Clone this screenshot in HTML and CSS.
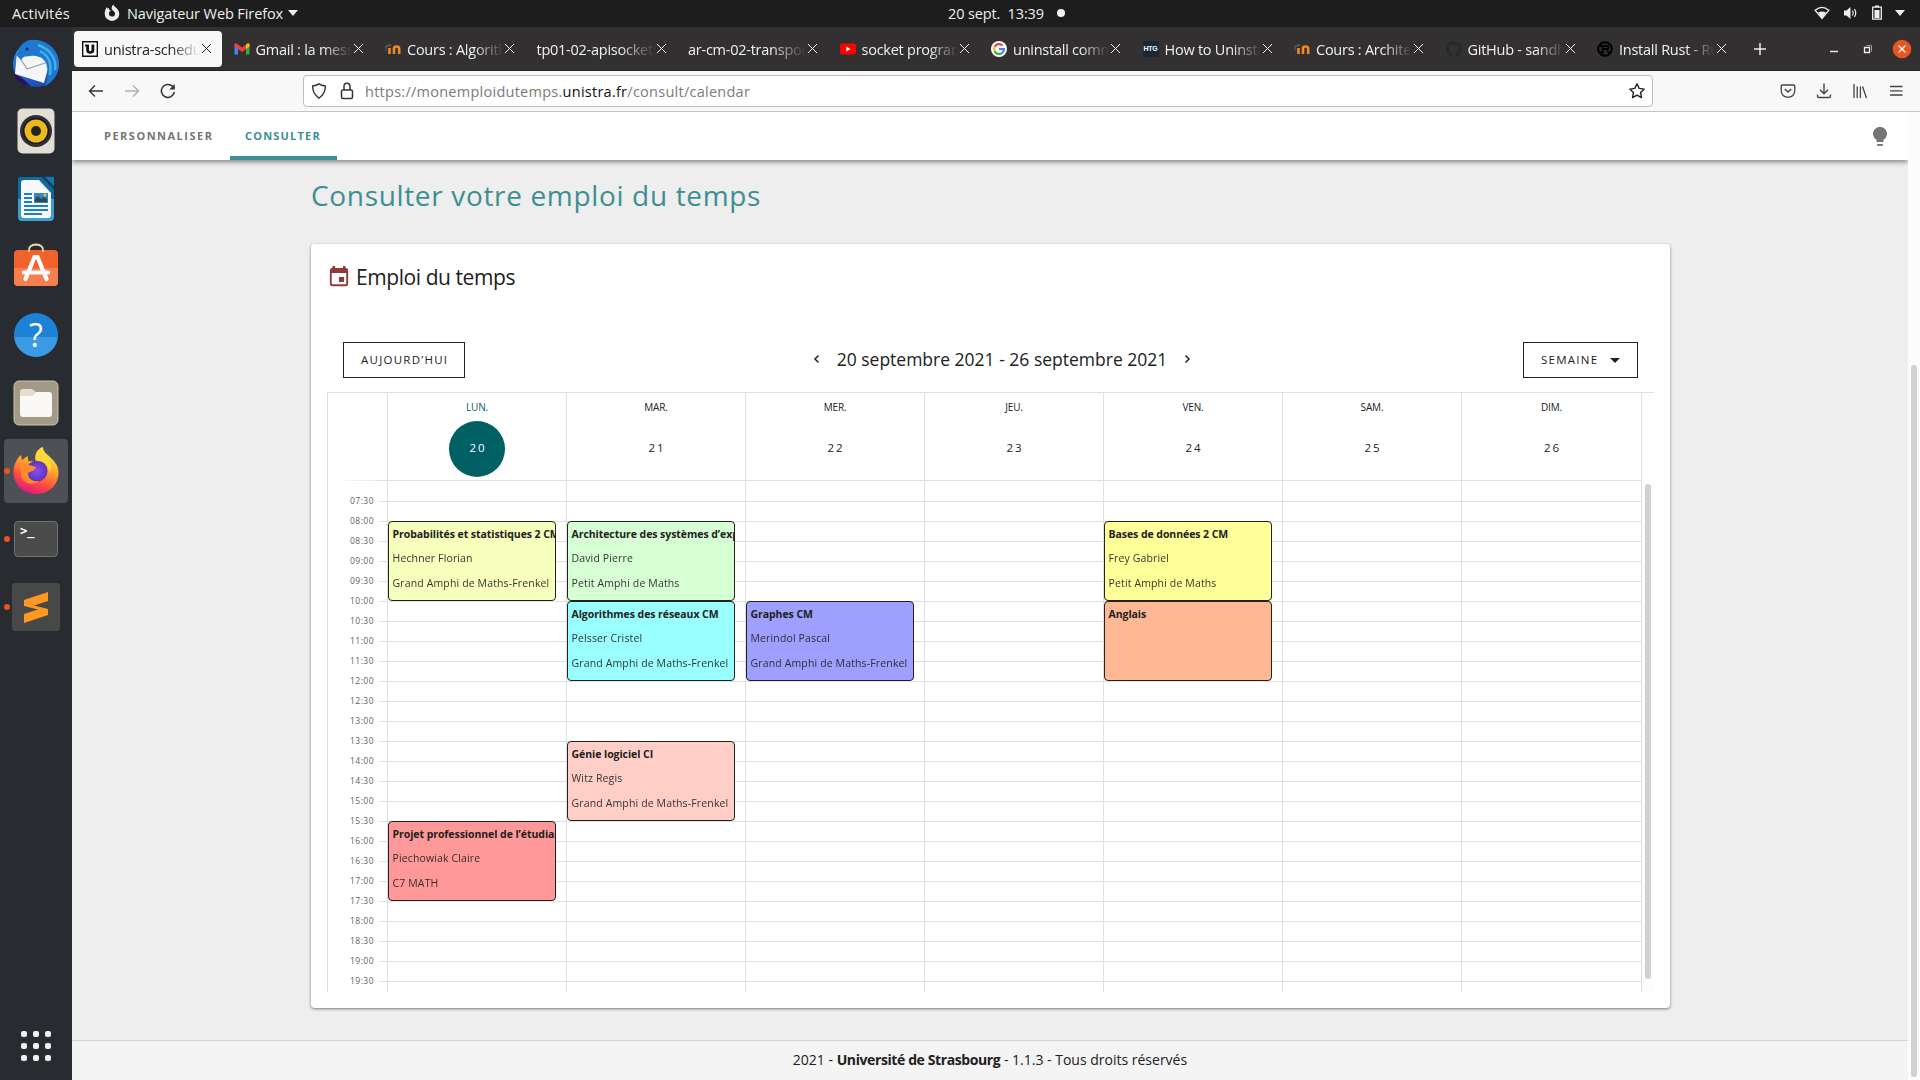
FILE: index.html
```html
<!DOCTYPE html>
<html lang="fr">
<head>
<meta charset="utf-8">
<title>Emploi du temps</title>
<link rel="stylesheet" href="styles.css">
</head>
<body>
<header class="topbar">
  <span class="t-act">Activités</span>
  <svg class="ff-sym" width="16" height="18" viewBox="0 0 16 18"><path d="M8 17A7.3 7.3 0 0 1 .7 9.700C.7 7 1.600 4.500 3 3l.5 1.800L5 4l.3 2 1.700.2C5.500 7 5 8 5 9.500a3 3 0 0 0 6 .2C11 8 10 7 8.500 6.200 7 5 7.500 2 9.500.5 9.800 3 15.300 4.500 15.300 9.700A7.300 7.300 0 0 1 8 17z" fill="#eee"/></svg>
  <span class="t-nav">Navigateur Web Firefox</span>
  <i class="caret"></i>
  <span class="t-date">20 sept.&nbsp; 13:39</span><i class="dot"></i>
  <div class="sys">
    <svg width="16" height="14" viewBox="0 0 16 14"><path d="M1.200 4.300Q8-1.600 14.800 4.300L8 12.500z" fill="none" stroke="#eee" stroke-width="1.300"/><path d="M4 6.500Q8 4.500 12 6.500L8 12.500z" fill="#eee"/></svg>
    <svg width="16" height="14" viewBox="0 0 16 14"><path d="M1 4.500h2.500L7.500 1v12L3.500 9.500H1z" fill="#eee"/><path d="M9.500 4.500q1.500 2.500 0 5M11.500 3q2.500 4 0 8" fill="none" stroke="#eee" stroke-width="1.200"/></svg>
    <svg width="12" height="16" viewBox="0 0 12 16"><path d="M1.700 2.200h8.600v12H1.700z" fill="none" stroke="#eee" stroke-width="1.300"/><path d="M3.500 5h5v8h-5zM4 .5h4v1.500H4z" fill="#eee"/></svg>
    <i class="caret"></i>
  </div>
</header>
<div class="desktop">
<nav class="dock">
  <div class="app"><svg width="52" height="52" viewBox="0 0 52 52"><defs><linearGradient id="tb" x2="1" y2="1"><stop stop-color="#1d8fe0"/><stop offset="1" stop-color="#2438a8"/></linearGradient></defs><circle cx="26" cy="27" r="23" fill="url(#tb)"/><path d="M4 36c0 6 8 12 17 13l-9-8z" fill="#2a0f62"/><path d="M7 14L31 20l8 8-5 18L5 37z" fill="#f5f6f8"/><path d="M7 16l10 16 21-7" fill="none" stroke="#9a9fa8" stroke-width="1.200"/><path d="M6 18C10 6 18 2 24 3c10-1 25 8 25 24 0 10-6 18-14 22 4-9 3-16 1-23-2-6-10-8-16-7-4 1-6-1-9 4z" fill="#1f78cf"/><path d="M28 8c12 4 19 14 17 25M30 14c8 4 12 12 10 24" stroke="#3fb0ea" stroke-width="2.500" fill="none"/><circle cx="17" cy="12" r="1.500" fill="#1a2c55"/></svg></div>
  <div class="app"><svg width="38" height="46" viewBox="0 0 38 46"><rect x=".5" y=".5" width="37" height="45" rx="5" fill="#e3ded3"/><circle cx="19" cy="23" r="16" fill="#2f2e38"/><circle cx="19" cy="23" r="13" fill="#17161d"/><circle cx="19" cy="23" r="11.500" fill="#ecb91d"/><circle cx="19" cy="23" r="5" fill="#222"/></svg></div>
  <div class="app"><svg width="38" height="46" viewBox="0 0 38 46"><rect x="1" y="1" width="36" height="44" rx="4" fill="#3f9fd0"/><path d="M1 23V5a4 4 0 0 1 4-4h32v22z" fill="#0d6ba3"/><path d="M4 7a3 3 0 0 1 3-3h15l12 13v22a3 3 0 0 1-3 3H7a3 3 0 0 1-3-3z" fill="#f6f8f9"/><path d="M24 0l13 14V0z" fill="#1b3b50"/><path d="M28 1h9v9z" fill="#1278af"/><path d="M7 18h8M7 22h8M7 26h8M7 30h24M7 34h24M7 38h18" stroke="#1e83bd" stroke-width="1.800"/><path d="M17 17h14v10H17z" fill="#2a8ac4"/><path d="M18 26v-3l3-3 3 3 3-2 3 2v3z" fill="#36474f"/><circle cx="28" cy="19" r="1.500" fill="#f4c430"/></svg></div>
  <div class="app soft"><svg width="46" height="44" viewBox="0 0 46 44"><rect x="1" y="7" width="44" height="36" rx="4" fill="#f1622c"/><path d="M1 25h44v14a4 4 0 0 1-4 4H5a4 4 0 0 1-4-4z" fill="#f4804f"/><path d="M16 9V7q0-5 7-5.500 7 .5 7 5.500v2" fill="none" stroke="#e9d9a6" stroke-width="1.800"/><path d="M12.500 36L21.500 14h3l9 22M11 29.500h24" fill="none" stroke="#fff" stroke-width="4.200" stroke-linecap="round"/></svg></div>
  <div class="app"><div class="help">?</div></div>
  <div class="app"><svg width="46" height="46" viewBox="0 0 46 46"><rect x="1" y="1" width="44" height="44" rx="5" fill="#a29a86" stroke="#c9c2af"/><path d="M7 12a3 3 0 0 1 3-3h9l4 3v8H7z" fill="#e4ded1"/><path d="M7 16h13l3-4h13a3 3 0 0 1 3 3v19a3 3 0 0 1-3 3H10a3 3 0 0 1-3-3z" fill="#faf9f7"/></svg></div>
  <div class="app"><i class="run"></i><div class="tile"><svg width="48" height="50" viewBox="0 0 48 50"><defs><linearGradient id="fx" x1=".7" y1="0" x2=".3" y2="1"><stop stop-color="#fff04a"/><stop offset=".4" stop-color="#ffa52a"/><stop offset=".7" stop-color="#ff4e3d"/><stop offset="1" stop-color="#e0128a"/></linearGradient><radialGradient id="fp"><stop stop-color="#8a4bf5"/><stop offset="1" stop-color="#5a36b8"/></radialGradient></defs><path d="M24 48C11 48 1.500 38.500 1.500 26c0-7 3-13 7.500-17l1 5 5.500-4 1 5.500c2-1 5-.5 7 0C22 9 25 3 31 1c0 5 4 7 8 11 4 4 7.500 8 7.500 14.500C46.500 39 37 48 24 48z" fill="url(#fx)"/><circle cx="25" cy="25" r="10.500" fill="url(#fp)"/><path d="M7 19c7-2 11 0 17 2-1 4-5 4-8 6 0 7 6 9 11 8-8 6-18 1-18-7 0-4 0-6-2-9z" fill="#ff8a2b"/><path d="M25 15c6 0 13 3 12 12 4-6 2-14-3-19-3-2-5-4-4-7-5 3-8 9-5 14z" fill="#ffd83c"/></svg></div></div>
  <div class="app"><i class="run"></i><div class="term"><span>&gt;_</span></div></div>
  <div class="app"><i class="run"></i><div class="subl"><svg width="26" height="32" viewBox="0 0 26 32"><path d="M1 9L25 1v9l-14 4.500L25 18v6L1 32v-9l14-4.500L1 15z" fill="#ff9820"/></svg></div></div>
  <div class="grid9"><i></i><i></i><i></i><i></i><i></i><i></i><i></i><i></i><i></i></div>
</nav>
<main class="browser">
  <div class="tabs">
    <div class="tab on"><svg class="fav" viewBox="0 0 16 16"><path d="M.7.700h14.600v14.600H.7z" fill="#fff" stroke="#111" stroke-width="1.400"/><path d="M3 3.500h4V9q0 1.300 1.200 1.300T9.500 9V3.500h2.800V9q0 3.800-4.100 3.800T4.200 9V5.500H3z" fill="#111"/></svg><span class="tt">unistra-schedule</span><b class="x"></b></div>
    <div class="tab"><svg class="fav" viewBox="0 0 16 16"><path d="M.5 3v10.500H4V7z" fill="#4285f4"/><path d="M15.500 3v10.500H12V7z" fill="#34a853"/><path d="M.5 3.500Q1 1.500 3 2.700L8 6.500l5-3.800q2-1.200 2.500.8v2L8 11 .5 5.500z" fill="#ea4335"/><path d="M12 3.500l1-.8q2-1.200 2.500.8v2L12 8z" fill="#fbbc04"/></svg><span class="tt">Gmail : la messagerie</span><b class="x"></b></div>
    <div class="tab"><svg class="fav" viewBox="0 0 16 16"><path d="M4.500 13V7M9 13V7.500q0-2 2.500-2t2.700 2V13" fill="none" stroke="#f08a24" stroke-width="2.600"/><path d="M0 5l5-2L7 4.500 1.500 6v4H.7z" fill="#6a5546"/></svg><span class="tt">Cours : Algorithmes</span><b class="x"></b></div>
    <div class="tab"><span class="tt wide">tp01-02-apisocket</span><b class="x"></b></div>
    <div class="tab"><span class="tt wide">ar-cm-02-transport</span><b class="x"></b></div>
    <div class="tab"><svg class="fav" viewBox="0 0 16 16"><rect y="2.500" width="16" height="11" rx="2.500" fill="#f00"/><path d="M6.300 5.500v5L10.500 8z" fill="#fff"/></svg><span class="tt">socket programming</span><b class="x"></b></div>
    <div class="tab"><svg class="fav" viewBox="0 0 16 16"><circle cx="8" cy="8" r="8" fill="#fff"/><g fill="none" stroke-width="2.200"><path d="M11.500 4.400A5 5 0 0 0 3.600 5.800" stroke="#ea4335"/><path d="M3.600 5.800a5 5 0 0 0 0 4.400" stroke="#fbbc05"/><path d="M3.600 10.200a5 5 0 0 0 7.800 1.500" stroke="#34a853"/><path d="M11.400 11.700A5 5 0 0 0 13 8H8" stroke="#4285f4"/></g></svg><span class="tt">uninstall command</span><b class="x"></b></div>
    <div class="tab"><i class="fav htg">HTG</i><span class="tt">How to Uninstall</span><b class="x"></b></div>
    <div class="tab"><svg class="fav" viewBox="0 0 16 16"><path d="M4.500 13V7M9 13V7.500q0-2 2.500-2t2.700 2V13" fill="none" stroke="#f08a24" stroke-width="2.600"/><path d="M0 5l5-2L7 4.500 1.500 6v4H.7z" fill="#6a5546"/></svg><span class="tt">Cours : Architecture</span><b class="x"></b></div>
    <div class="tab"><svg class="fav" viewBox="0 0 16 16"><path d="M8 0C3.580 0 0 3.580 0 8c0 3.540 2.290 6.530 5.470 7.590.4.070.55-.17.550-.38 0-.19-.01-.82-.01-1.490-2.010.37-2.530-.49-2.690-.94-.09-.23-.48-.94-.82-1.130-.28-.15-.68-.52-.01-.53.630-.01 1.080.58 1.230.82.720 1.210 1.870.87 2.330.66.070-.52.280-.87.510-1.070-1.780-.2-3.640-.89-3.640-3.950 0-.87.310-1.590.82-2.150-.08-.2-.36-1.020.08-2.120 0 0 .67-.21 2.200.82a7.400 7.400 0 0 1 4 0c1.530-1.040 2.200-.82 2.200-.82.440 1.100.16 1.920.08 2.120.51.560.82 1.270.82 2.150 0 3.070-1.870 3.750-3.650 3.950.29.250.54.730.54 1.480 0 1.070-.01 1.930-.01 2.200 0 .21.150.46.550.38A8 8 0 0 0 16 8c0-4.420-3.580-8-8-8z" fill="#24292f"/></svg><span class="tt">GitHub - sandhu</span><b class="x"></b></div>
    <div class="tab"><svg class="fav" viewBox="0 0 16 16"><circle cx="8" cy="8" r="6.700" fill="none" stroke="#000" stroke-width="1.800"/><circle cx="8" cy="8" r="7.500" fill="none" stroke="#000" stroke-dasharray="1 1"/><path d="M2.500 5h7q2 0 2 1.500T9.500 8H6M2.500 11.500h4.500M5.500 5v6.500M9 8q1.500 0 1.700 2t2.500 1.500" fill="none" stroke="#000" stroke-width="1.800"/></svg><span class="tt">Install Rust - Rust</span><b class="x"></b></div>
    <svg class="plus" width="14" height="14" viewBox="0 0 14 14"><path d="M7 1v12M1 7h12" stroke="#eee" stroke-width="1.500"/></svg>
    <div class="win"><svg width="10" height="12" viewBox="0 0 10 12"><path d="M1 8.500h8" stroke="#eee" stroke-width="1.400"/></svg><svg width="10" height="12" viewBox="0 0 10 12"><path d="M1.500 4.500h5v5h-5z" fill="none" stroke="#eee" stroke-width="1.300"/><path d="M3.500 2.500h5v6" fill="none" stroke="#999"/></svg><svg width="20" height="20" viewBox="0 0 20 20"><circle cx="10" cy="10" r="9.300" fill="#e95420"/><path d="M6.500 6.500l7 7m0-7l-7 7" stroke="#fff" stroke-width="1.400"/></svg></div>
  </div>
  <div class="urlbar">
    <div class="navbtns">
      <svg width="16" height="16" viewBox="0 0 16 16"><path d="M15 8H1.800M7 2.500L1.500 8 7 13.500" fill="none" stroke="#333" stroke-width="1.400"/></svg>
      <svg width="16" height="16" viewBox="0 0 16 16"><path d="M1 8h13.200M9 2.500L14.500 8 9 13.500" fill="none" stroke="#b0b0b0" stroke-width="1.400"/></svg>
      <svg width="16" height="16" viewBox="0 0 16 16"><path d="M14.300 9A6.500 6.500 0 1 1 12.500 3.300L14 5" fill="none" stroke="#333" stroke-width="1.500"/><path d="M14.800 1v5.500H9.300z" fill="#333"/></svg>
    </div>
    <div class="field">
      <svg width="16" height="16" viewBox="0 0 16 16"><path d="M8 .9Q10.500 2.600 14.300 3q.4 7.500-6.300 12.200Q1.300 10.500 1.700 3 5.500 2.600 8 .9z" fill="none" stroke="#333" stroke-width="1.400"/></svg>
      <svg width="16" height="18" viewBox="0 0 16 18"><rect x="2.500" y="8" width="11" height="8.500" rx="1.500" fill="none" stroke="#333" stroke-width="1.500"/><path d="M5 8V4.500Q5 1.300 8 1.300t3 3.200V8" fill="none" stroke="#333" stroke-width="1.500"/></svg>
      <span class="url"><span>https://monemploidutemps.</span><b>unistra.fr</b><span>/consult/calendar</span></span>
      <svg class="star" width="18" height="18" viewBox="0 0 18 18"><path d="M9 1.800l2.200 4.600 5 .7-3.600 3.500.9 5L9 13.200l-4.500 2.400.9-5L1.800 7.100l5-.7z" fill="none" stroke="#222" stroke-width="1.400" stroke-linejoin="round"/></svg>
    </div>
    <div class="tools">
      <svg width="16" height="16" viewBox="0 0 16 16"><path d="M2.500 2h11q1.300 0 1.300 1.300V7q0 6.800-6.800 7.300Q1.200 13.800 1.200 7V3.300Q1.200 2 2.500 2z" fill="none" stroke="#444" stroke-width="1.300"/><path d="M4.800 6L8 9l3.200-3" fill="none" stroke="#444" stroke-width="1.500"/></svg>
      <svg width="16" height="16" viewBox="0 0 16 16"><path d="M8 .5v10M4 6.800l4 4 4-4M1.500 11.500v1.700q0 1.300 1.300 1.300h10.400q1.300 0 1.300-1.300v-1.700" fill="none" stroke="#444" stroke-width="1.400"/></svg>
      <svg width="16" height="16" viewBox="0 0 16 16"><path d="M2 1v14M5.200 3.500V15M8.400 3.500V15M10.500 3.500L14.500 15" fill="none" stroke="#444" stroke-width="1.300"/></svg>
      <svg width="16" height="16" viewBox="0 0 16 16"><path d="M2 3.500h12.500M2 7.800h12.500M2 12h12.500" stroke="#444" stroke-width="1.300"/></svg>
    </div>
  </div>
  <div class="page">
    <div class="view">
      <div class="appbar">
        <a class="link">PERSONNALISER</a><a class="link active">CONSULTER</a>
        <svg class="bulb" width="14" height="20" viewBox="0 0 14 20"><path d="M3.500 16v-2.200A7 7 0 1 1 10.500 13.800V16zM4.200 18h5.600v2H4.200z" fill="#757575"/></svg>
      </div>
      <div class="content">
        <h1>Consulter votre emploi du temps</h1>
        <section class="card">
          <h2><svg width="20" height="21" viewBox="0 0 20 21"><path d="M3.500 0H6v3H3.500zM14 0h2.500v3H14z" fill="#8e3a3a"/><path d="M1.800 4.700q0-1.700 1.500-1.700h13.400q1.500 0 1.500 1.700v12.800q0 1.700-1.500 1.700H3.300q-1.500 0-1.500-1.700z" fill="#fff" stroke="#8e3a3a" stroke-width="1.900"/><path d="M1.500 3.500h17V7h-17zM10 11h5v5h-5z" fill="#8e3a3a"/></svg><span>Emploi du temps</span></h2>
          <div class="bar">
            <button class="btn">AUJOURD’HUI</button>
            <div class="range"><svg width="8" height="10" viewBox="0 0 8 10"><path d="M5.500 1.500L2 5l3.500 3.500" fill="none" stroke="#222" stroke-width="1.500"/></svg><span>20 septembre 2021 - 26 septembre 2021</span><svg width="8" height="10" viewBox="0 0 8 10"><path d="M2.500 1.500L6 5 2.500 8.500" fill="none" stroke="#222" stroke-width="1.500"/></svg></div>
            <button class="btn sem"><span>SEMAINE</span><i></i></button>
          </div>
          <div class="cal">
            <div class="head">
              <div class="corner"></div>
              <div class="hd today"><span>LUN.</span><b>20</b></div>
              <div class="hd"><span>MAR.</span><b>21</b></div>
              <div class="hd"><span>MER.</span><b>22</b></div>
              <div class="hd"><span>JEU.</span><b>23</b></div>
              <div class="hd"><span>VEN.</span><b>24</b></div>
              <div class="hd"><span>SAM.</span><b>25</b></div>
              <div class="hd last"><span>DIM.</span><b>26</b></div>
            </div>
            <div class="body">
              <div class="hours">
                <span>07:30</span><span>08:00</span><span>08:30</span><span>09:00</span><span>09:30</span><span>10:00</span><span>10:30</span><span>11:00</span><span>11:30</span><span>12:00</span><span>12:30</span><span>13:00</span><span>13:30</span><span>14:00</span><span>14:30</span><span>15:00</span><span>15:30</span><span>16:00</span><span>16:30</span><span>17:00</span><span>17:30</span><span>18:00</span><span>18:30</span><span>19:00</span><span>19:30</span>
              </div>
              <div class="day">
                <article class="ev h0800 lime"><h3>Probabilités et statistiques 2 CM</h3><p>Hechner Florian</p><p>Grand Amphi de Maths-Frenkel</p></article>
                <article class="ev h1530 red"><h3>Projet professionnel de l’étudiant</h3><p>Piechowiak Claire</p><p>C7 MATH</p></article>
              </div>
              <div class="day">
                <article class="ev h0800 green"><h3>Architecture des systèmes d’exploitation</h3><p>David Pierre</p><p>Petit Amphi de Maths</p></article>
                <article class="ev h1000 cyan"><h3>Algorithmes des réseaux CM</h3><p>Pelsser Cristel</p><p>Grand Amphi de Maths-Frenkel</p></article>
                <article class="ev h1330 pink"><h3>Génie logiciel CI</h3><p>Witz Regis</p><p>Grand Amphi de Maths-Frenkel</p></article>
              </div>
              <div class="day">
                <article class="ev h1000 violet"><h3>Graphes CM</h3><p>Merindol Pascal</p><p>Grand Amphi de Maths-Frenkel</p></article>
              </div>
              <div class="day"></div>
              <div class="day">
                <article class="ev h0800 yellow"><h3>Bases de données 2 CM</h3><p>Frey Gabriel</p><p>Petit Amphi de Maths</p></article>
                <article class="ev h1000 orange"><h3>Anglais</h3></article>
              </div>
              <div class="day"></div>
              <div class="day last"></div>
              <div class="track"><i></i></div>
            </div>
          </div>
        </section>
      </div>
      <footer class="foot"><span>2021 - </span><b>Université de Strasbourg</b><span> - 1.1.3 - Tous droits réservés</span></footer>
    </div>
    <div class="scroll"><i></i></div>
  </div>
</main>
</div>
</body>
</html>
```
FILE: styles.css
```css
* { box-sizing: border-box; }
body { margin: 0; width: 1920px; height: 1080px; overflow: hidden; display: flex; flex-direction: column; font-family: "Open Sans", "Noto Sans", sans-serif; color: #212121; }
h1, h2, h3, p { margin: 0; font-weight: 400; }
i { font-style: normal; }
svg { display: block; flex: none; }
span, b, h1, h2, h3, p { white-space: pre; }

.topbar { height: 27px; flex: none; background: #1d1d1d; color: #eee; display: flex; align-items: center; padding: 0 15px 1px 12px; font-size: 14.5px; }
.t-act { width: 92px; letter-spacing: .2px; }
.ff-sym { margin-right: 7px; }
.t-nav { width: 161px; letter-spacing: -.1px; }
.caret { border: 5px solid transparent; border-top: 6px solid #eee; border-bottom: 0; }
.t-date { margin-left: 650px; width: 108px; letter-spacing: -.12px; }
.dot { width: 8px; height: 8px; border-radius: 50%; background: #f2f2f2; margin-left: 1px; }
.sys { margin-left: auto; display: flex; align-items: center; gap: 12px; }
.sys svg:first-child { margin-right: 1px; }

.desktop { display: flex; flex: 1; min-height: 0; }
.dock { width: 72px; flex: none; background: #282c31; display: flex; flex-direction: column; align-items: center; padding-top: 2px; }
.app { width: 72px; height: 68px; display: flex; align-items: center; justify-content: center; flex: none; position: relative; }
.soft { padding-bottom: 5px; }
.run { position: absolute; left: 4px; top: 31px; width: 6px; height: 6px; border-radius: 50%; background: #e95420; }
.help { width: 44px; height: 44px; border-radius: 50%; background: linear-gradient(#1c82d8 55%, #3a9ae4 55%); color: #fff; font-size: 32px; line-height: 43px; text-align: center; }
.tile { width: 64px; height: 64px; border-radius: 4px; background: #4d5155; display: flex; align-items: center; justify-content: center; }
.term { width: 44px; height: 36px; border-radius: 4px; border: 1px solid #707070; background: #4b4b4b; color: #fff; font: bold 12px/16px "DejaVu Sans Mono", monospace; padding: 1px 5px; }
.subl { width: 48px; height: 48px; border-radius: 3px; background: #484848; display: flex; align-items: center; justify-content: center; }
.grid9 { margin: auto 0 19px; display: grid; grid-template-columns: repeat(3, 6px); grid-auto-rows: 6px; gap: 6px; }
.grid9 i { background: #f2f2f2; border-radius: 2px; }

.browser { flex: 1; min-width: 0; display: flex; flex-direction: column; }
.tabs { height: 44px; flex: none; background: #333031; border-bottom: 1px solid #222; display: flex; align-items: center; padding: 0 8px 0 2px; color: #f0f0f0; font-size: 14.5px; letter-spacing: -.25px; }
.tab { width: 148px; height: 36px; flex: none; margin-right: 3.5px; border-radius: 4px; display: flex; align-items: center; padding-left: 8px; }
.tab.on { background: #f8f8f8; color: #222; }
.fav { width: 16px; height: 16px; flex: none; margin-right: 6px; }
.htg { background: #1b2738; color: #fff; font: bold 7px/16px "Liberation Sans", sans-serif; text-align: center; }
.tt { width: 96px; overflow: hidden; padding-top: 1px; -webkit-mask-image: linear-gradient(90deg, #000 70%, transparent); mask-image: linear-gradient(90deg, #000 70%, transparent); }
.tt.wide { width: 118px; }
.x { width: 9px; height: 9px; margin-left: 2px; background: linear-gradient(45deg, transparent 45%, currentColor 45%, currentColor 55%, transparent 55%), linear-gradient(-45deg, transparent 45%, currentColor 45%, currentColor 55%, transparent 55%); }
.plus { margin-left: 12px; }
.win { margin-left: auto; display: flex; align-items: center; gap: 24px; }
.win svg:last-child { margin-left: -5px; }

.urlbar { height: 41px; flex: none; background: #f8f8f8; border-bottom: 1px solid #c4c4c4; display: flex; align-items: center; justify-content: space-between; padding: 0 16px; }
.navbtns, .tools { display: flex; gap: 20px; }
.navbtns { width: 215px; }
.field { width: 1350px; height: 32px; margin-right: auto; background: #fff; border: 1px solid #bdbdbd; border-radius: 4px; display: flex; align-items: center; padding: 0 6px 0 7px; gap: 12px; }
.url { font-size: 14.5px; color: #7b7b7b; margin-left: -2px; letter-spacing: .26px; }
.url b { font-weight: 400; color: #111; }
.star { margin-left: auto; }

.page { flex: 1; min-height: 0; display: flex; }
.view { width: 1836px; display: flex; flex-direction: column; background: #eee; }
.appbar { height: 48px; flex: none; background: #fff; box-shadow: 0 2px 5px rgba(0,0,0,.45); display: flex; align-items: stretch; padding: 0 21px 0 14px; clip-path: inset(0 0 -10px 0); }
.link { padding: 0 17px 2px 18px; display: flex; align-items: center; font-size: 11px; font-weight: 700; letter-spacing: 1.5px; color: #757575; border-bottom: 4px solid transparent; border-top: 4px solid transparent; width: 144px; }
.link.active { width: 107px; padding-left: 15px; color: #3d8f93; border-bottom-color: #3d8f93; letter-spacing: 1.200px; }
.bulb { margin: 14px 0 0 auto; }
.content { padding: 15px 238px 0 239px; flex: 1; }
h1 { font-size: 28px; line-height: 40px; height: 69px; letter-spacing: .66px; color: #3d8f93; }
.card { height: 764px; background: #fff; border-radius: 4px; padding: 16px; box-shadow: 0 1px 3px rgba(0,0,0,.5); }
h2 { display: flex; align-items: center; gap: 7px; height: 34px; padding: 0 0 1px 2px; font-size: 21px; letter-spacing: -.43px; }
.bar { margin-top: 48px; height: 36px; padding: 0 16px; display: flex; justify-content: space-between; }
.btn { height: 36px; width: 122px; border: 1px solid #212121; background: #fff; font: 11.500px "Open Sans", sans-serif; letter-spacing: 1.250px; color: #212121; display: flex; align-items: center; padding: 0 17px 2px; }
.sem { width: 115px; justify-content: space-between; }
.sem i { border: 5px solid transparent; border-top-color: #212121; border-bottom: 0; margin-top: 2px; }
.range { display: flex; align-items: center; gap: 16px; font-size: 17.500px; margin-left: 16px; padding-bottom: 2px; }
.cal { margin-top: 14px; border-top: 1px solid #e0e0e0; border-left: 1px solid #e0e0e0; }
.head { display: flex; height: 88px; }
.corner { width: 59px; background: linear-gradient(90deg, #fff 10%, #e0e0e0) bottom / 100% 1px no-repeat; }
.hd { width: 179px; border-left: 1px solid #e0e0e0; border-bottom: 1px solid #e0e0e0; display: flex; flex-direction: column; align-items: center; font-size: 10px; font-weight: 500; letter-spacing: -.15px; }
.hd.last, .day.last { width: 181px; border-right: 1px solid #e0e0e0; }
.hd span { line-height: 29px; height: 28px; }
.hd b { width: 56px; height: 56px; line-height: 54px; border-radius: 50%; text-align: center; font-weight: 400; font-size: 11.500px; letter-spacing: 2px; text-indent: 2px; }
.today { color: #006064; }
.today b { background: #006064; color: #fff; }
.body { display: flex; height: 511px; overflow: hidden; }
.hours { width: 59px; padding-top: 10px; color: #616161; font-size: 8.500px; letter-spacing: .45px; }
.hours span { display: flex; justify-content: flex-end; height: 20px; line-height: 20px; }
.hours span::after { content: ""; width: 8px; height: 1px; margin: 10px 0 0 5px; background: #e0e0e0; }
.day { width: 179px; border-left: 1px solid #e0e0e0; padding-top: 20px; display: grid; grid-template-rows: repeat(25, 20px); background: linear-gradient(#e0e0e0 1px, transparent 1px) 0 0 / 100% 20px content-box; }
.ev { grid-column: 1; width: 168px; height: 80px; border: 1px solid #212121; border-radius: 4px; padding: 1px 0 0 3.5px; overflow: hidden; font-size: 10.500px; letter-spacing: .14px; }
.ev h3 { font-size: 10.500px; font-weight: 700; line-height: 22px; height: 23px; letter-spacing: -.06px; }
.ev p { line-height: 25px; opacity: .9; }
.h0800 { grid-row: 2 / span 4; }
.h1000 { grid-row: 6 / span 4; }
.h1330 { grid-row: 13 / span 4; }
.h1530 { grid-row: 17 / span 4; }
.lime { background: #f6ffbb; }
.red { background: #ff9999; }
.green { background: #d6ffd4; }
.cyan { background: #99ffff; }
.pink { background: #ffcfc7; }
.violet { background: #9f9fff; }
.yellow { background: #ffff99; }
.orange { background: #ffb894; }
.track { width: 12px; background: #fcfcfc; padding: 3px 3px; }
.track i { display: block; width: 6px; height: 495px; border-radius: 3px; background: #d1d1d1; }
.foot { height: 40px; flex: none; background: #f4f4f4; border-top: 1px solid #d2d2d2; display: flex; align-items: center; justify-content: center; font-size: 14px; padding-bottom: 2px; }
.foot b { letter-spacing: -.4px; }
.scroll { width: 12px; background: #fcfcfc; padding: 253px 3px 0; }
.scroll i { display: block; height: 712px; border-radius: 3px; background: #d1d1d1; }
```
